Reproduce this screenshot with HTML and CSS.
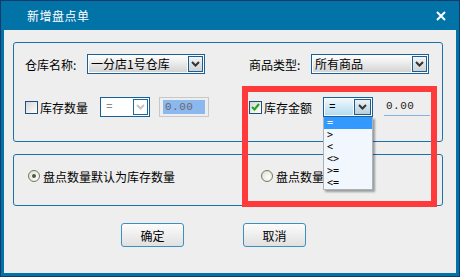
FILE: index.html
```html
<!DOCTYPE html>
<html>
  <head>
    <title>新增盘点单</title>
    <link rel="stylesheet" href="styles.css">
  </head>
  <body>
    <div class="window">
      <div class="titlebar">
        <span class="title">新增盘点单</span>
        <svg class="close" width="10" height="10" viewBox="0 0 10 10">
          <path d="M1 1 L9 9 M9 1 L1 9" stroke="#fff" stroke-width="2" fill="none"/>
        </svg>
      </div>
      <div class="client">
        <div class="group group-filter">
          <div class="row">
            <span class="label">仓库名称:</span>
            <div class="combo combo-wide">
              <span class="combo-text">一分店1号仓库</span>
              <span class="combo-btn"><svg width="9" height="6" viewBox="0 0 9 6"><polyline points="1,1 4.5,4.5 8,1" stroke="#333" stroke-width="2" fill="none"/></svg></span>
            </div>
            <span class="label label-second">商品类型:</span>
            <div class="combo combo-wide">
              <span class="combo-text">所有商品</span>
              <span class="combo-btn"><svg width="9" height="6" viewBox="0 0 9 6"><polyline points="1,1 4.5,4.5 8,1" stroke="#333" stroke-width="2" fill="none"/></svg></span>
            </div>
          </div>
          <div class="row">
            <label class="check-cell"><span class="checkbox"></span>库存数量</label>
            <div class="combo combo-small disabled">
              <span class="combo-text">=</span>
              <span class="combo-btn"><svg width="9" height="6" viewBox="0 0 9 6"><polyline points="1,1 4.5,4.5 8,1" stroke="#c4c4c4" stroke-width="2" fill="none"/></svg></span>
            </div>
            <div class="textbox disabled"><span class="sel">0.00</span></div>
            <label class="check-cell check-second"><span class="checkbox checked"><svg width="9" height="8" viewBox="0 0 9 8"><polyline points="1,4 3.5,6.5 8,1" stroke="#1da51d" stroke-width="2" fill="none"/></svg></span>库存金额</label>
            <div class="combo combo-small active">
              <span class="combo-text">=</span>
              <span class="combo-btn"><svg width="9" height="6" viewBox="0 0 9 6"><polyline points="1,1 4.5,4.5 8,1" stroke="#333" stroke-width="2" fill="none"/></svg></span>
            </div>
            <div class="amount">0.00</div>
          </div>
        </div>
        <div class="group group-mode">
          <div class="row row-radio">
            <label class="radio-cell"><span class="radio checked"></span>盘点数量默认为库存数量</label>
            <label class="radio-cell"><span class="radio"></span>盘点数量</label>
          </div>
        </div>
        <div class="actions">
          <button class="btn">确定</button>
          <button class="btn">取消</button>
        </div>
      </div>
      <div class="highlight"></div>
      <ul class="droplist">
        <li class="selected">=</li>
        <li>&gt;</li>
        <li>&lt;</li>
        <li>&lt;&gt;</li>
        <li>&gt;=</li>
        <li>&lt;=</li>
      </ul>
    </div>
  </body>
</html>
```

FILE: styles.css
```css
* {
  box-sizing: border-box;
}
body {
  margin: 0;
  font-family: "Noto Sans CJK SC", sans-serif;
  font-size: 12px;
  color: #000;
}
.window {
  position: relative;
  width: 460px;
  height: 277px;
  background: #0173a7;
  border: 1px solid #16386a;
  padding: 0 3px 3px 3px;
  display: flex;
  flex-direction: column;
}
.titlebar {
  height: 29px;
  display: flex;
  align-items: center;
  justify-content: space-between;
  padding: 0 10px 0 23px;
  color: #fff;
}
.title {
  font-size: 12px;
  letter-spacing: 0.5px;
}
.client {
  flex: 1;
  background: #eeeeee;
  padding: 12px 13px 0 9px;
}
.group {
  border: 1px solid #1a72aa;
  border-radius: 3px;
}
.group-filter {
  height: 100px;
  padding: 11px 0 0 11px;
}
.row {
  display: flex;
  align-items: center;
  height: 20px;
}
.row + .row {
  margin-top: 23px;
}
.label {
  width: 62px;
}
.label-second {
  margin-left: 44px;
}

/* combo boxes */
.combo {
  display: flex;
  flex: none;
  height: 20px;
  border: 1px solid #17609a;
  background: #fff;
  padding: 1px;
}
.combo-wide {
  width: 118px;
}
.combo-small {
  width: 50px;
}
.combo-text {
  flex: 1;
  padding-left: 2px;
  line-height: 16px;
  background: linear-gradient(#fdfdfd, #d4d4d4);
  white-space: nowrap;
  overflow: hidden;
}
.combo-btn {
  width: 15px;
  margin-left: 1px;
  border: 1px solid #1c5e90;
  background: linear-gradient(#f4f4f4, #d2d2d2);
  display: flex;
  align-items: center;
  justify-content: center;
}
.combo-small .combo-text {
  font-family: "Liberation Mono", monospace;
  font-size: 11px;
  padding-left: 4px;
}
.combo.disabled .combo-text {
  background: #fff;
  color: #8a8a8a;
}
.combo.disabled .combo-btn {
  border-color: #1a6a9c;
  background: #fff;
}
.combo.active .combo-text {
  background: linear-gradient(#eef7fd, #b4dbf1);
}
.combo.active .combo-btn {
  width: 17px;
  background: linear-gradient(#e9f1f6, #b8cfdc);
}

/* text inputs */
.textbox {
  flex: none;
  width: 50px;
  height: 20px;
  margin-left: 9px;
  border: 1px solid #c8c8c8;
  padding: 2px 3px;
  background: #eeeeee;
}
.sel {
  display: block;
  height: 14px;
  line-height: 14px;
  background: #8bb8ee;
  color: #6a6a6a;
  font-family: "Liberation Mono", monospace;
  font-size: 11px;
  letter-spacing: 0.5px;
  padding-left: 2px;
}
.amount {
  flex: none;
  width: 46px;
  height: 18px;
  margin-left: 11px;
  padding-left: 2px;
  border-bottom: 1px solid #82b2e6;
  font-family: "Liberation Mono", monospace;
  font-size: 11px;
  letter-spacing: 0.5px;
  line-height: 16px;
  color: #222;
}

/* checkboxes */
.check-cell {
  flex: none;
  width: 75px;
  display: flex;
  align-items: center;
}
.check-second {
  width: 74px;
  margin-left: 40px;
}
.checkbox {
  width: 13px;
  height: 13px;
  margin-right: 2px;
  border: 1px solid #1f4f7c;
  background: linear-gradient(135deg, #d6d6d6, #ffffff);
  display: flex;
  align-items: center;
  justify-content: center;
}

/* radio group */
.group-mode {
  margin-top: 12px;
  height: 52px;
  padding: 14px 0 0 14px;
}
.row-radio {
  height: 14px;
}
.radio-cell {
  flex: none;
  width: 233px;
  display: flex;
  align-items: center;
}
.radio-cell + .radio-cell {
  width: auto;
}
.radio {
  width: 12px;
  height: 12px;
  margin-right: 3px;
  border: 1px solid #6f7b5c;
  border-radius: 50%;
  background: radial-gradient(circle at 65% 65%, #ffffff, #d8dccd);
  display: flex;
  align-items: center;
  justify-content: center;
}
.radio.checked::after {
  content: "";
  width: 4px;
  height: 4px;
  border-radius: 50%;
  background: #4d5a3b;
}

/* buttons */
.actions {
  display: flex;
  gap: 59px;
  margin: 17px 0 0 108px;
}
.btn {
  width: 63px;
  height: 24px;
  border: 1px solid #3d8ec1;
  border-radius: 3px;
  background: linear-gradient(#fcfcfc, #e0e0e0);
  font-family: "Noto Sans CJK SC", sans-serif;
  font-size: 12px;
  color: #000;
  padding: 0;
}

/* overlays */
.highlight {
  position: absolute;
  left: 241px;
  top: 85px;
  width: 195px;
  height: 121px;
  border: 6px solid #fe3a3a;
}
.droplist {
  position: absolute;
  left: 322px;
  top: 116px;
  width: 50px;
  margin: 0;
  padding: 0;
  list-style: none;
  background: #f1f7fc;
  border: 1px solid #a7b3bd;
  border-top: none;
  box-shadow: 2px 2px 2px rgba(0, 0, 0, 0.35);
  font-family: "DejaVu Sans Mono", monospace;
  font-size: 10px;
}
.droplist li {
  height: 12px;
  line-height: 12px;
  padding-left: 3px;
}
.droplist li.selected {
  background: #3399ff;
  color: #fff;
}
```
